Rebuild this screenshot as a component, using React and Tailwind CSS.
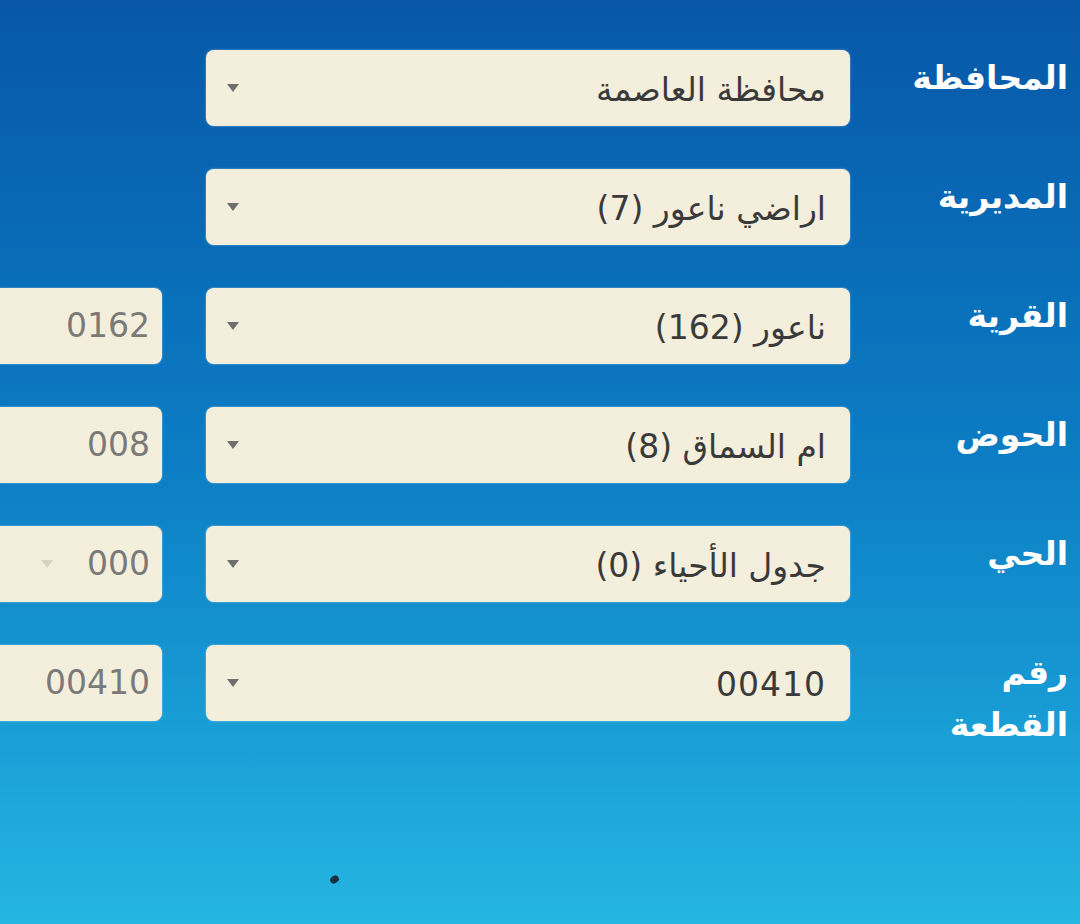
import React from "react";

const rows = [
  { label: "المحافظة", value: "محافظة العاصمة", code: null },
  { label: "المديرية", value: "اراضي ناعور (7)", code: null },
  { label: "القرية", value: "ناعور (162)", code: "0162" },
  { label: "الحوض", value: "ام السماق (8)", code: "008" },
  { label: "الحي", value: "جدول الأحياء (0)", code: "000", faintArrow: true },
  { label: ["رقم", "القطعة"], value: "00410", code: "00410" },
];

const Caret = ({ className }) => (
  <svg width="14" height="10" viewBox="0 0 14 10" className={className}>
    <path d="M1 1 L13 1 L7 9 Z" fill="currentColor" />
  </svg>
);

const Row = ({ row }) => (
  <div className="flex items-start">
    <div className="w-[162px] shrink-0">
      {row.code && (
        <div className="flex h-[76px] items-center justify-between rounded-r-lg bg-[#f3efdc] pl-10 pr-3 shadow-[0_0_2px_rgba(255,255,255,0.6)]">
          {row.faintArrow ? <Caret className="text-[#d9d4bf]" /> : <span />}
          <span className="text-[33px] text-[#7a7a78]">{row.code}</span>
        </div>
      )}
    </div>

    <div className="ml-[44px] flex h-[76px] w-[644px] shrink-0 items-center justify-between rounded-lg bg-[#f3efdc] pl-5 pr-6 shadow-[0_0_2px_rgba(255,255,255,0.6)]">
      <Caret className="text-[#6f6f70]" />
      <span dir="rtl" className="pt-1 text-[33px] tracking-[1px] text-[#3a3a3a]">
        {row.value}
      </span>
    </div>

    <div
      dir="rtl"
      className="flex-1 pt-[2px] pr-3 text-[33px] font-bold leading-[52px] text-white"
    >
      {Array.isArray(row.label)
        ? row.label.map((l) => <div key={l}>{l}</div>)
        : row.label}
    </div>
  </div>
);

export default function App() {
  return (
    <div
      className="relative h-[924px] w-[1080px] overflow-hidden bg-gradient-to-b from-[#0857a8] via-[#0c7dc4] to-[#25b6e2] pt-[50px]"
      style={{ fontFamily: '"DejaVu Sans", "Noto Sans", sans-serif' }}
    >
      <div className="flex flex-col gap-[43px]">
        {rows.map((r, i) => (
          <Row key={i} row={r} />
        ))}
      </div>
      <div className="absolute left-[330px] top-[876px] h-[7px] w-[9px] rotate-[-35deg] rounded-sm bg-[#17313f]" />
    </div>
  );
}
